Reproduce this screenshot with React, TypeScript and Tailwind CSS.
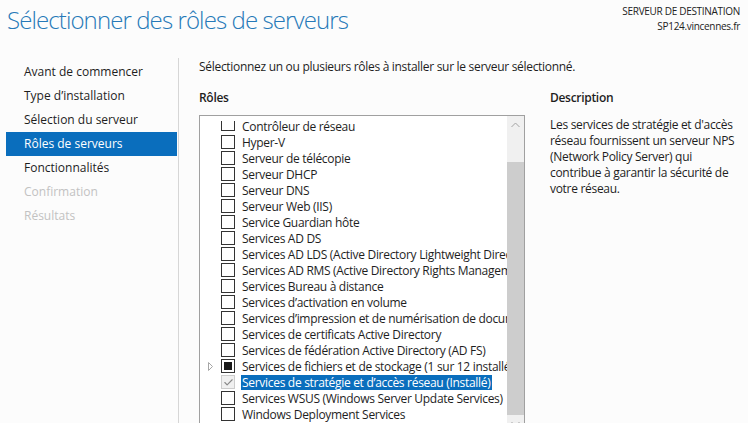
import { Check } from "lucide-react";

const NAV = [
  { label: "Avant de commencer", state: "normal" },
  { label: "Type d’installation", state: "normal" },
  { label: "Sélection du serveur", state: "normal" },
  { label: "Rôles de serveurs", state: "active" },
  { label: "Fonctionnalités", state: "normal" },
  { label: "Confirmation", state: "disabled" },
  { label: "Résultats", state: "disabled" },
] as const;

type Role = {
  label: string;
  check?: "none" | "partial" | "installed";
  expand?: boolean;
  selected?: boolean;
  clipped?: boolean;
};

const ROLES: Role[] = [
  { label: "Contrôleur de réseau", clipped: true },
  { label: "Hyper-V" },
  { label: "Serveur de télécopie" },
  { label: "Serveur DHCP" },
  { label: "Serveur DNS" },
  { label: "Serveur Web (IIS)" },
  { label: "Service Guardian hôte" },
  { label: "Services AD DS" },
  { label: "Services AD LDS (Active Directory Lightweight Directory Services)" },
  { label: "Services AD RMS (Active Directory Rights Management Services)" },
  { label: "Services Bureau à distance" },
  { label: "Services d’activation en volume" },
  { label: "Services d’impression et de numérisation de documents" },
  { label: "Services de certificats Active Directory" },
  { label: "Services de fédération Active Directory (AD FS)" },
  { label: "Services de fichiers et de stockage (1 sur 12 installé(s))", check: "partial", expand: true },
  { label: "Services de stratégie et d’accès réseau (Installé)", check: "installed", selected: true },
  { label: "Services WSUS (Windows Server Update Services)" },
  { label: "Windows Deployment Services" },
];

function RoleBox({ check, clipped }: { check?: Role["check"]; clipped?: boolean }) {
  if (check === "installed") {
    return (
      <span className="w-[14px] h-[14px] border border-[#cccccc] bg-[#f0f0f0] flex items-center justify-center shrink-0">
        <Check size={11} strokeWidth={2.5} className="text-[#8a8a8a]" />
      </span>
    );
  }
  if (clipped) {
    return <span className="w-[14px] h-[10px] border border-t-0 border-[#333333] bg-white shrink-0 self-end mb-[3px]" />;
  }
  return (
    <span className="w-[14px] h-[14px] border border-[#333333] bg-white flex items-center justify-center shrink-0">
      {check === "partial" && <span className="w-[8px] h-[8px] bg-[#1a1a1a]" />}
    </span>
  );
}

export default function App() {
  return (
    <div
      className="w-[748px] h-[423px] overflow-hidden bg-[#fcfcfc] text-[#1e1e1e] flex flex-col"
      style={{ fontFamily: '"Open Sans", "Noto Sans", sans-serif' }}
    >
      {/* header */}
      <div className="h-[58px] flex justify-between shrink-0">
        <h1 className="pl-[7px] pt-[2px] text-[24px] font-light text-[#2679b8] tracking-[-0.9px]">
          Sélectionner des rôles de serveurs
        </h1>
        <div className="pr-[8px] pt-[4px] text-right text-[10px] leading-[15px] tracking-[-0.3px] text-[#222]">
          <div>SERVEUR DE DESTINATION</div>
          <div>SP124.vincennes.fr</div>
        </div>
      </div>

      <div className="flex flex-1 min-h-0">
        {/* wizard steps */}
        <div className="w-[179px] shrink-0 border-r border-[#d6d6d6] pl-[6px] pr-[1px] pt-[2px]">
          {NAV.map((item) => (
            <div
              key={item.label}
              className={
                item.state === "active"
                  ? "h-[24px] flex items-center pl-[18px] text-[12px] bg-[#0a6ebd] text-white"
                  : item.state === "disabled"
                  ? "h-[24px] flex items-center pl-[18px] text-[12px] text-[#c2c2c2]"
                  : "h-[24px] flex items-center pl-[18px] text-[12px] text-[#1e1e1e]"
              }
            >
              {item.label}
            </div>
          ))}
        </div>

        {/* content */}
        <div className="flex-1 min-w-0 pl-[20px] flex flex-col tracking-[-0.3px]">
          <p className="text-[12px] leading-[16px] pt-[1px]">
            Sélectionnez un ou plusieurs rôles à installer sur le serveur sélectionné.
          </p>

          <div className="flex gap-[25px] mt-[15px] flex-1 min-h-0">
            <div className="w-[326px] shrink-0 flex flex-col">
              <div className="text-[12px] font-semibold leading-[16px] mb-[9px]">Rôles</div>
              <div className="flex-1 border border-[#a0a0a0] border-b-0 bg-white flex min-h-0 overflow-hidden">
                <div className="flex-1 min-w-0 overflow-hidden pt-[2px]">
                  {ROLES.map((r) => (
                    <div key={r.label} className="h-[16px] flex items-center">
                      <span className="w-[21px] self-stretch shrink-0 flex items-center justify-end pr-[8px]">
                        {r.expand && (
                          <svg width="5" height="9" viewBox="0 0 5 9">
                            <path d="M0.5 0.5 L4.5 4.5 L0.5 8.5 Z" fill="none" stroke="#a6a6a6" />
                          </svg>
                        )}
                      </span>
                      <RoleBox check={r.check} clipped={r.clipped} />
                      <span
                        className={
                          r.selected
                            ? "ml-[6px] px-[1px] text-[12px] leading-[15px] whitespace-nowrap bg-[#0a6ebd] text-white"
                            : "ml-[6px] px-[1px] text-[12px] leading-[15px] whitespace-nowrap"
                        }
                      >
                        {r.label}
                      </span>
                    </div>
                  ))}
                </div>
                {/* scrollbar */}
                <div className="w-[17px] shrink-0 bg-[#f0f0f0] flex flex-col">
                  <div className="h-[17px] shrink-0 flex items-center justify-center">
                    <svg width="9" height="6" viewBox="0 0 9 6">
                      <path d="M0.5 5 L4.5 1 L8.5 5" fill="none" stroke="#a3a3a3" />
                    </svg>
                  </div>
                  <div className="h-[29px] shrink-0" />
                  <div className="h-[253px] shrink-0 bg-[#cdcdcd]" />
                  <div className="h-[17px] shrink-0 flex items-center justify-center">
                    <svg width="9" height="6" viewBox="0 0 9 6">
                      <path d="M0.5 1 L4.5 5 L8.5 1" fill="none" stroke="#a3a3a3" />
                    </svg>
                  </div>
                </div>
              </div>
            </div>

            <div className="flex-1 min-w-0 pr-[8px]">
              <div className="text-[12px] font-semibold leading-[16px] mb-[11px]">Description</div>
              <p className="text-[12px] leading-[16px]">
                Les services de stratégie et d'accès réseau fournissent un serveur NPS (Network Policy Server) qui
                contribue à garantir la sécurité de votre réseau.
              </p>
            </div>
          </div>
        </div>
      </div>
    </div>
  );
}
